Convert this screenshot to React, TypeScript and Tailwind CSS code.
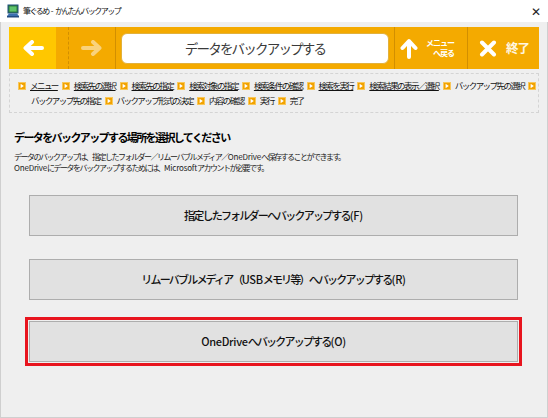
import React from "react";

const line1 = [
  { label: "メニュー", link: true },
  { label: "検索先の選択", link: true },
  { label: "検索先の指定", link: true },
  { label: "検索対象の指定", link: true },
  { label: "検索条件の確認", link: true },
  { label: "検索を実行", link: true },
  { label: "検索結果の表示／選択", link: true },
  { label: "バックアップ先の選択", link: false },
];

const line2 = ["バックアップ先の指定", "バックアップ形式の決定", "内容の確認", "実行", "完了"];

function StepIcon() {
  return (
    <svg width="8" height="8" viewBox="0 0 8 8" className="shrink-0">
      <rect x="0" y="0" width="8" height="8" fill="#f2a300" />
      <rect x="0.5" y="0.5" width="7" height="7" fill="none" stroke="#f8c75a" strokeWidth="1" />
      <path d="M2.6 1.8 L5.8 4 L2.6 6.2 Z" fill="#ffffff" />
    </svg>
  );
}

function AppIcon() {
  return (
    <svg width="14" height="14" viewBox="0 0 14 14">
      <rect x="2" y="1" width="10" height="8" fill="#2f7d3c" stroke="#1d4f7a" strokeWidth="1" />
      <rect x="3.5" y="2.5" width="7" height="5" fill="#5fc46a" />
      <path d="M1 12 L3 9.5 H11 L13 12 Z" fill="#3a6fb0" />
      <rect x="1" y="12" width="12" height="1.5" fill="#234a80" />
    </svg>
  );
}

function WideButton({ children }: { children: React.ReactNode }) {
  return (
    <div className="flex h-[41px] w-[489px] items-center justify-center whitespace-nowrap border border-[#adadad] bg-[#e1e1e1] text-[11px] font-medium tracking-[-1.8px] text-[#111]">
      {children}
    </div>
  );
}

export default function App() {
  return (
    <div className="flex h-[418px] w-[548px] flex-col bg-white font-['Noto_Sans_CJK_JP',sans-serif] text-black">
      {/* title bar */}
      <div className="flex h-[22px] items-center pl-[6px] pr-[7px]">
        <AppIcon />
        <span className="ml-[3px] whitespace-pre text-[8px] tracking-[-1.5px] text-[#111]">
          筆ぐるめ<span className="tracking-normal"> - </span>かんたんバックアップ
        </span>
        <span className="ml-auto text-[12px] leading-none text-[#222]">✕</span>
      </div>

      <div className="flex flex-1 flex-col border-x border-b border-[#cfcfcf] bg-[#efefef] bg-[radial-gradient(#fbfbfb_0.6px,transparent_0.7px)] bg-[length:6px_6px]">
        {/* toolbar */}
        <div className="mx-[8px] mt-[5px] flex h-[42px] items-stretch bg-[#f4aa00]">
          <div className="flex w-[47px] items-center justify-center bg-[#ffc700]">
            <svg width="22" height="16" viewBox="0 0 22 16">
              <path d="M20 8 H4 M10 2 L3.5 8 L10 14" fill="none" stroke="#fff" strokeWidth="4" strokeLinecap="round" strokeLinejoin="round" />
            </svg>
          </div>
          <div className="w-[13px] border-r border-dashed border-[#d28f00]" />
          <div className="flex w-[47px] items-center justify-center border-r border-[#d28f00]">
            <svg width="22" height="16" viewBox="0 0 22 16">
              <path d="M2 8 H18 M12 2 L18.5 8 L12 14" fill="none" stroke="#f9d27c" strokeWidth="4" strokeLinecap="round" strokeLinejoin="round" />
            </svg>
          </div>
          <div className="ml-[5px] mt-[6px] flex h-[31px] w-[268px] items-center justify-center rounded-[6px] border border-[#e2b13c] bg-white text-[13.5px] tracking-[-1.8px] text-[#3a3a3a]">
            データをバックアップする
          </div>
          <div className="ml-[5px] flex w-[73px] items-center border-l border-[#d28f00] pl-[5px]">
            <svg width="18" height="21" viewBox="0 0 18 21" className="shrink-0">
              <path d="M9 19 V4 M2.5 10 L9 3 L15.5 10" fill="none" stroke="#fff" strokeWidth="4" strokeLinecap="round" strokeLinejoin="round" />
            </svg>
            <div className="ml-[8px] flex flex-col items-end whitespace-nowrap text-[8px] font-bold leading-[10px] tracking-[-1px] text-white">
              <span className="block">メニュー</span>
              <span className="block">へ戻る</span>
            </div>
          </div>
          <div className="flex flex-1 items-center border-l border-[#d28f00] pl-[11px]">
            <svg width="18" height="17" viewBox="0 0 18 17" className="shrink-0">
              <path d="M3 2.5 L15 14.5 M15 2.5 L3 14.5" fill="none" stroke="#fff" strokeWidth="4" strokeLinecap="round" />
            </svg>
            <span className="ml-[9px] text-[12.5px] font-bold tracking-[-1px] text-[#fff6e0]">終了</span>
          </div>
        </div>

        {/* steps */}
        <div className="mx-[8px] mt-[4px] flex h-[40px] flex-col justify-center gap-[4px] whitespace-nowrap border border-dashed border-[#d4d4d4] pl-[8px] text-[8.5px] leading-[11px] tracking-[-1.55px] text-[#111]">
          <div className="flex items-center">
            {line1.map((s) => (
              <React.Fragment key={s.label}>
                <StepIcon />
                <span className={"ml-[4px] mr-[4px] shrink-0 " + (s.link ? "underline underline-offset-[1px]" : "")}>{s.label}</span>
              </React.Fragment>
            ))}
            <StepIcon />
          </div>
          <div className="flex items-center pl-[13px]">
            {line2.map((s, i) => (
              <React.Fragment key={s}>
                {i > 0 && <StepIcon />}
                <span className={"shrink-0 " + (i > 0 ? "ml-[4px] mr-[4px]" : "mr-[4px]")}>{s}</span>
              </React.Fragment>
            ))}
          </div>
        </div>

        {/* heading and text */}
        <div className="ml-[13px] mt-[16px] text-[11px] font-bold leading-[16px] tracking-[-1.6px]">
          データをバックアップする場所を選択してください
        </div>
        <div className="ml-[13px] mt-[6px] text-[8px] leading-[11px] tracking-[-1.5px] text-[#222]">
          <div>
            データのバックアップは、指定したフォルダー／リムーバブルメディア／<span className="tracking-[-0.2px]">OneDrive</span>へ保存することができます。
          </div>
          <div>
            <span className="tracking-[-0.2px]">OneDrive</span>にデータをバックアップするためには、<span className="tracking-[-0.2px]">Microsoft</span>アカウントが必要です。
          </div>
        </div>

        {/* choices */}
        <div className="ml-[28px] mt-[22px] flex flex-col">
          <WideButton>
            指定したフォルダーへバックアップする<span className="tracking-[-0.3px]">(F)</span>
          </WideButton>
          <div className="mt-[23px]">
            <WideButton>
              リムーバブルメディア（<span className="tracking-[-0.3px]">USB</span>メモリ等）へバックアップする<span className="tracking-[-0.3px]">(R)</span>
            </WideButton>
          </div>
          <div className="-ml-[4px] mt-[17px] w-[497px] border-[3px] border-[#e8141e] p-px">
            <WideButton>
              <span className="tracking-[-0.3px]">OneDrive</span>へバックアップする<span className="tracking-[-0.3px]">(O)</span>
            </WideButton>
          </div>
        </div>
      </div>
    </div>
  );
}
